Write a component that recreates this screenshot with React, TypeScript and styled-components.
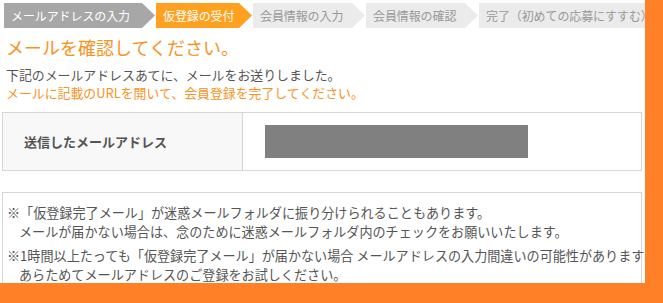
import styled, { createGlobalStyle } from 'styled-components'

const GlobalStyle = createGlobalStyle`
  html, body {
    margin: 0;
    padding: 0;
    background: #ff8026;
  }
  body {
    font-family: "Noto Sans CJK JP", "Noto Sans", sans-serif;
    color: #555;
  }
`

const Page = styled.div`
  width: 645px;
  height: 283px;
  background: #fff;
  overflow: hidden;
  padding: 3px 0 0 2px;
  box-sizing: border-box;
`

const StepBar = styled.ol`
  display: flex;
  list-style: none;
  margin: 0 0 0 2px;
  padding: 0;
  height: 25px;
  white-space: nowrap;
`

type StepState = 'done' | 'current' | 'todo'

const stepBg: Record<StepState, string> = {
  done: '#a7a7a7',
  current: '#ffa11e',
  todo: '#ebebeb',
}

const stepColor: Record<StepState, string> = {
  done: '#fff',
  current: '#fff',
  todo: '#999',
}

const Step = styled.li<{ $state: StepState; $w: number }>`
  flex: none;
  width: ${({ $w }) => $w}px;
  height: 25px;
  margin-right: 1px;
  padding-left: 7px;
  box-sizing: border-box;
  display: flex;
  align-items: center;
  font-size: 12px;
  letter-spacing: -0.1px;
  background: ${({ $state }) => stepBg[$state]};
  color: ${({ $state }) => stepColor[$state]};
  clip-path: polygon(0 0, calc(100% - 13px) 0, 100% 50%, calc(100% - 13px) 100%, 0 100%);
`

const Title = styled.h1`
  margin: 7px 0 0 4px;
  font-size: 18px;
  line-height: 24px;
  font-weight: normal;
  color: #f7931e;
`

const Lead = styled.p<{ $accent?: boolean }>`
  margin: 0 0 0 4px;
  font-size: 12.9px;
  line-height: 18px;
  color: ${({ $accent }) => ($accent ? '#f7941d' : '#555')};
`

const LeadBlock = styled.div`
  margin-top: 7px;
`

const Table = styled.div`
  margin-top: 10px;
  width: 640px;
  height: 59px;
  box-sizing: border-box;
  border: 1px solid #d6d6d6;
  display: flex;
`

const LabelCell = styled.div`
  width: 240px;
  background: #f8f8f8;
  border-right: 1px solid #d6d6d6;
  display: flex;
  align-items: center;
  padding-left: 21px;
  box-sizing: border-box;
  font-size: 13px;
  font-weight: bold;
  color: #555;
`

const ValueCell = styled.div`
  flex: 1;
  display: flex;
  align-items: center;
  padding-left: 22px;
`

const Masked = styled.div`
  width: 263px;
  height: 33px;
  background: #808080;
`

const Notes = styled.div`
  margin-top: 21px;
  width: 640px;
  box-sizing: border-box;
  border: 1px solid #d6d6d6;
  padding: 10px 0 10px 4px;
`

const Note = styled.p`
  margin: 0 0 5px;
  padding-left: 12px;
  text-indent: -12px;
  font-size: 13.1px;
  line-height: 19px;
  color: #555;
  white-space: nowrap;
`

const steps: { label: string; state: StepState; w: number }[] = [
  { label: 'メールアドレスの入力', state: 'done', w: 151 },
  { label: '仮登録の受付', state: 'current', w: 96 },
  { label: '会員情報の入力', state: 'todo', w: 112 },
  { label: '会員情報の確認', state: 'todo', w: 112 },
  { label: '完了（初めての応募にすすむ）', state: 'todo', w: 180 },
]

export default function App() {
  return (
    <>
      <GlobalStyle />
      <Page>
        <StepBar>
          {steps.map((s) => (
            <Step key={s.label} $state={s.state} $w={s.w}>
              {s.label}
            </Step>
          ))}
        </StepBar>
        <Title>メールを確認してください。</Title>
        <LeadBlock>
          <Lead>下記のメールアドレスあてに、メールをお送りしました。</Lead>
          <Lead $accent>メールに記載のURLを開いて、会員登録を完了してください。</Lead>
        </LeadBlock>
        <Table>
          <LabelCell>送信したメールアドレス</LabelCell>
          <ValueCell>
            <Masked />
          </ValueCell>
        </Table>
        <Notes>
          <Note>
            ※「仮登録完了メール」が迷惑メールフォルダに振り分けられることもあります。
            <br />
            メールが届かない場合は、念のために迷惑メールフォルダ内のチェックをお願いいたします。
          </Note>
          <Note>
            ※1時間以上たっても「仮登録完了メール」が届かない場合 メールアドレスの入力間違いの可能性があります
            <br />
            あらためてメールアドレスのご登録をお試しください。
          </Note>
        </Notes>
      </Page>
    </>
  )
}
